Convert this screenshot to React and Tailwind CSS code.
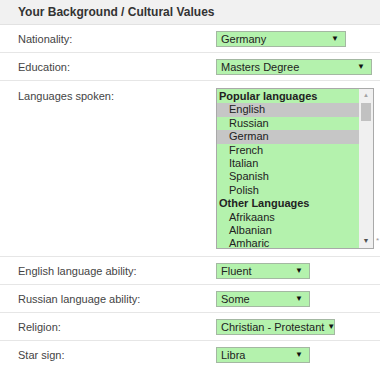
import React from "react";

const popular = ["English", "Russian", "German", "French", "Italian", "Spanish", "Polish"];
const other = ["Afrikaans", "Albanian", "Amharic"];
const selected = ["English", "German"];

function Select({ value, width }) {
  return (
    <div
      className="flex items-center justify-between gap-[3px] h-[16px] bg-[#b4f2ad] border border-[#a4b8a2] pl-[4px] pr-[6px] text-[11px] text-[#222] leading-none whitespace-nowrap"
      style={{ width }}
    >
      <span>{value}</span>
      <span className="text-[8px] text-[#111]">▼</span>
    </div>
  );
}

function Row({ label, children, last }) {
  return (
    <div className={"flex items-start pt-[6px] pb-[5px] " + (last ? "" : "border-b border-[#e6e6e6]")}>
      <div className="w-[216px] pl-[18px] text-[11px] text-[#444] leading-[16px]">{label}</div>
      {children}
    </div>
  );
}

export default function App() {
  return (
    <div className="w-[380px] h-[369px] overflow-hidden bg-white font-['Liberation_Sans',Arial,sans-serif]">
      <div className="h-[25px] bg-[#f1f1f1] border-b border-[#e2e2e2] pl-[18px] flex items-center text-[12px] font-bold text-[#333]">
        Your Background / Cultural Values
      </div>
      <Row label="Nationality:">
        <Select value="Germany" width={130} />
      </Row>
      <Row label="Education:">
        <Select value="Masters Degree" width={156} />
      </Row>
      <div className="flex items-start pt-[7px] pb-[7px] border-b border-[#e6e6e6]">
        <div className="w-[216px] pl-[18px] text-[11px] text-[#444] leading-[16px]">Languages spoken:</div>
        <div className="relative">
          <div className="flex w-[158px] h-[161px] border border-[#a9a9a9] bg-[#b4f2ad] text-[11px] text-[#222] leading-[13.4px]">
            <div className="flex-1 pt-[1px]">
              <div className="pl-[2px] font-bold">Popular languages</div>
              {popular.map((l) => (
                <div key={l} className={"pl-[12px] " + (selected.includes(l) ? "bg-[#c6c6c6]" : "")}>{l}</div>
              ))}
              <div className="pl-[2px] font-bold">Other Languages</div>
              {other.map((l) => (
                <div key={l} className="pl-[12px]">{l}</div>
              ))}
            </div>
            <div className="w-[14px] bg-[#f0f0f0] flex flex-col items-center">
              <span className="text-[6px] text-[#a3a3a3] h-[14px] flex items-center">▲</span>
              <div className="w-[10px] h-[18px] bg-[#c1c1c1]"></div>
              <div className="flex-1"></div>
              <span className="text-[7px] text-[#505050] h-[14px] flex items-center">▼</span>
            </div>
          </div>
          <span className="absolute left-[160px] bottom-[2px] text-[8px] text-[#999]">*</span>
        </div>
      </div>
      <Row label="English language ability:">
        <Select value="Fluent" width={94} />
      </Row>
      <Row label="Russian language ability:">
        <Select value="Some" width={94} />
      </Row>
      <Row label="Religion:">
        <Select value="Christian - Protestant" width={119} />
      </Row>
      <Row label="Star sign:" last>
        <Select value="Libra" width={94} />
      </Row>
    </div>
  );
}
